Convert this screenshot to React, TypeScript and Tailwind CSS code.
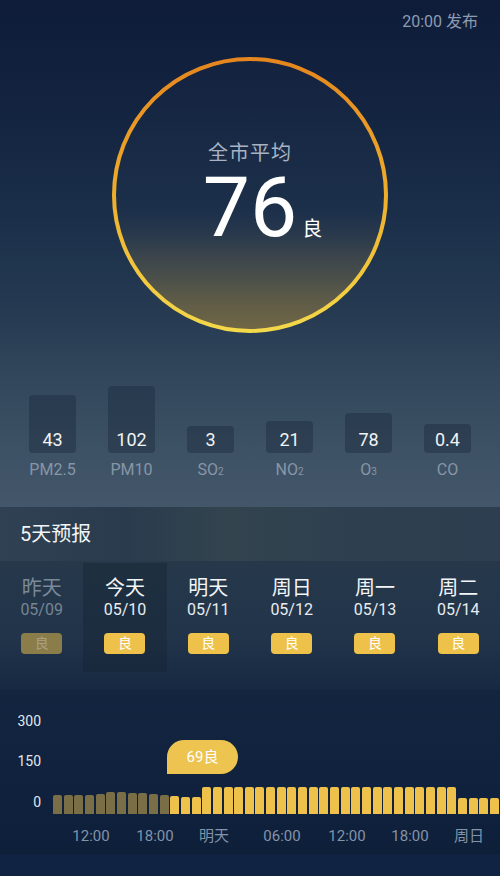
import React from "react";

const pollutants = [
  { v: "43", h: "h-[58px]", name: <>PM2.5</> },
  { v: "102", h: "h-[67px]", name: <>PM10</> },
  { v: "3", h: "h-[27px]", name: <>SO<span className="text-[10px]">2</span></> },
  { v: "21", h: "h-[32px]", name: <>NO<span className="text-[10px]">2</span></> },
  { v: "78", h: "h-[40px]", name: <>O<span className="text-[10px]">3</span></> },
  { v: "0.4", h: "h-[29px]", name: <>CO</> },
];

const days = [
  { d: "昨天", date: "05/09", past: true },
  { d: "今天", date: "05/10", today: true },
  { d: "明天", date: "05/11" },
  { d: "周日", date: "05/12" },
  { d: "周一", date: "05/13" },
  { d: "周二", date: "05/14" },
];

const dim = [19, 19, 19, 19, 20, 22, 22, 21, 21, 20, 19];
const future: number[] = [18, 17, 17];
for (let i = 0; i < 24; i++) future.push(27);
for (let i = 0; i < 5; i++) future.push(16);

const xLabels = [
  { t: "12:00", c: 91 },
  { t: "18:00", c: 155 },
  { t: "明天", c: 214 },
  { t: "06:00", c: 282 },
  { t: "12:00", c: 347 },
  { t: "18:00", c: 410 },
  { t: "周日", c: 469 },
];

export default function App() {
  return (
    <div className="w-[500px] h-[876px] overflow-hidden flex flex-col font-['Roboto','Noto_Sans_CJK_SC',sans-serif] bg-[#0f213c]">
      <div className="h-[507px] shrink-0 flex flex-col bg-[linear-gradient(180deg,#0e1c39_0%,#12223f_18%,#1a2e49_42%,#263b52_62%,#34485d_76%,#3d5164_88%,#44576a_100%)]">
        <div className="h-[32px] pt-[12px] pr-[22px] flex justify-end text-[16px] leading-[20px] text-[#8d9ab0]">
          20:00 发布
        </div>
        <div className="mt-[23px] mx-auto w-[280px] h-[280px] relative shrink-0">
          <svg className="absolute inset-0" width="280" height="280" viewBox="0 0 280 280">
            <defs>
              <linearGradient id="ring" x1="0" y1="0" x2="0" y2="1">
                <stop offset="0%" stopColor="#e5861e" />
                <stop offset="50%" stopColor="#eeae2c" />
                <stop offset="100%" stopColor="#f4d94a" />
              </linearGradient>
              <linearGradient id="fill" x1="0" y1="0" x2="0" y2="1">
                <stop offset="0%" stopColor="#2a3b55" stopOpacity="0.1" />
                <stop offset="55%" stopColor="#2a3a52" stopOpacity="0.15" />
                <stop offset="72%" stopColor="#55554a" stopOpacity="0.5" />
                <stop offset="88%" stopColor="#6c6445" stopOpacity="0.78" />
                <stop offset="100%" stopColor="#7a6c42" stopOpacity="0.9" />
              </linearGradient>
            </defs>
            <circle cx="140" cy="140" r="136" fill="url(#fill)" stroke="url(#ring)" strokeWidth="4" />
          </svg>
          <div className="relative flex flex-col items-center pt-[86px]">
            <div className="text-[20px] leading-[24px] text-[#a7b2c2] tracking-[1px]">全市平均</div>
            <div className="w-full grid grid-cols-[1fr_auto_1fr] items-baseline mt-[8px]">
              <div />
              <div className="text-[84px] leading-[70px] font-normal text-white">76</div>
              <div className="text-[20px] leading-[20px] text-white pl-[5px]">良</div>
            </div>
          </div>
        </div>
        <div className="mt-[45px] grid grid-cols-6 px-[13px]">
          {pollutants.map((p, i) => (
            <div key={i} className="flex flex-col items-center">
              <div className="h-[73px] flex items-end justify-center">
                <div className={`w-[47px] ${p.h} rounded-[4px] bg-[#1b2a3b]/45 flex items-end justify-center pb-[3px] text-[18px] leading-[20px] text-[#f1f3f5]`}>
                  {p.v}
                </div>
              </div>
              <div className="mt-[7px] text-[16px] leading-[20px] text-[#8796a6]">{p.name}</div>
            </div>
          ))}
        </div>
      </div>

      <div className="h-[54px] shrink-0 flex items-center pl-[20px] text-[20px] text-[#f2f4f6] bg-[linear-gradient(90deg,#2f4152_0%,#293b4d_25%,#33444f_45%,#2e3f4f_70%,#2d3e50_100%)]">
        5天预报
      </div>

      <div className="h-[129px] shrink-0 pt-[2px] grid grid-cols-6 content-start bg-[linear-gradient(180deg,#26384a_0%,#22344a_60%,#172942_100%)]">
        {days.map((d, i) => (
          <div key={i} className={`h-[109px] flex flex-col items-center pt-[13px] ${d.today ? "bg-[#142233]/40" : ""}`}>
            <div className={`text-[20px] leading-[24px] ${d.past ? "text-[#7b8a99]" : "text-[#f3f5f7]"}`}>{d.d}</div>
            <div className={`text-[16px] leading-[20px] ${d.past ? "text-[#768594]" : "text-[#e8ecf0]"}`}>{d.date}</div>
            <div className={`mt-[13px] w-[41px] h-[21px] rounded-[4px] flex items-center justify-center text-[14px] ${d.past ? "bg-[#8b7d4a] text-[#a9a184]" : "bg-[#eec24a] text-white"}`}>
              良
            </div>
          </div>
        ))}
      </div>

      <div className="flex-1 flex flex-col bg-[linear-gradient(180deg,#13253f_0%,#0f213c_60%,#0e1f3a_88%,#112343_89%,#112343_100%)]">
        <div className="h-[124px] flex">
          <div className="w-[41px] flex flex-col items-end pt-[21px] gap-[20px] text-[14px] leading-[20px] text-[#e3e7ec]">
            <div>300</div>
            <div>150</div>
            <div className="mt-[1px]">0</div>
          </div>
          <div className="ml-[12px] flex-1 relative flex items-end gap-[1.67px] overflow-hidden">
            {dim.map((h, i) => (
              <div key={"d" + i} className="w-[9px] shrink-0 rounded-t-[2px] bg-[#7a6e46]" style={{ height: h }} />
            ))}
            {future.map((h, i) => (
              <div key={"f" + i} className="w-[9px] shrink-0 rounded-t-[2px] bg-[#eec24a]" style={{ height: h }} />
            ))}
            <div className="absolute left-[114px] top-[50px] w-[71px] h-[34px] bg-[#ecc44f] rounded-[17px] rounded-bl-none flex items-center justify-center text-[15px] text-white">
              69良
            </div>
          </div>
        </div>
        <div className="relative h-[40px]">
          {xLabels.map((l, i) => (
            <div
              key={i}
              className="absolute top-[12px] w-[60px] text-center text-[15px] leading-[20px] text-[#8393a8]"
              style={{ left: l.c - 30 }}
            >
              {l.t}
            </div>
          ))}
        </div>
      </div>
    </div>
  );
}
